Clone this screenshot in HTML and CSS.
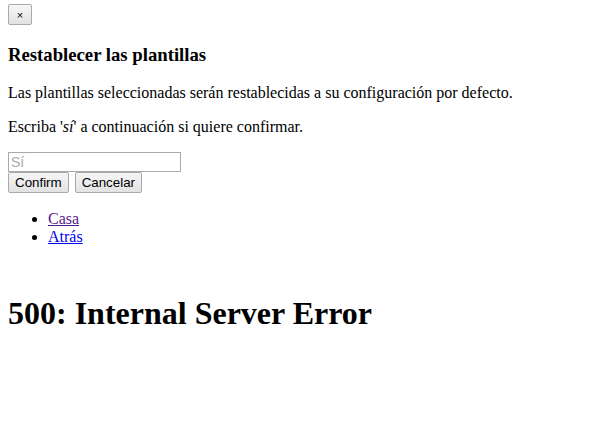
FILE: index.html
```html
<!DOCTYPE html>
<html lang="es">
<head>
<meta charset="utf-8">
<title>500</title>
<link rel="stylesheet" href="styles.css">
</head>
<body>
<div class="modal">
  <button class="close" type="button">×</button>
  <h3 class="title">Restablecer las plantillas</h3>
  <p>Las plantillas seleccionadas serán restablecidas a su configuración por defecto.</p>
  <p>Escriba '<em>sí</em>' a continuación si quiere confirmar.</p>
  <input class="field" type="text" placeholder="Sí"><br>
  <button class="btn" type="button">Confirm</button>
  <button class="btn" type="button">Cancelar</button>
</div>
<ul class="links">
  <li><a class="visited" href="#">Casa</a></li>
  <li><a class="link" href="#">Atrás</a></li>
</ul>
<h1 class="error">500: Internal Server Error</h1>
</body>
</html>
```
FILE: styles.css
```css
body {
  margin: 4px 8px 8px;
  font-family: "Liberation Serif", serif;
  font-size: 16px;
  color: #000;
  background: #fff;
}
.close {
  font-family: "Liberation Sans", sans-serif;
  font-size: 11px;
  width: 24px;
  height: 21px;
  padding: 0;
  border: 1px solid #a9a9a9;
  border-radius: 2px;
  background: linear-gradient(#f6f6f6, #e2e2e2);
  color: #000;
}
.title { font-size: 18.72px; margin: 19px 0 18px; }
.field {
  font-family: "Liberation Sans", sans-serif;
  font-size: 14px;
  width: 167px;
  height: 16px;
  padding: 1px 2px;
  border: 1px solid #a9a9a9;
  margin: 0;
}
.field::placeholder { color: #a9a9a9; }
.btn {
  font-family: "Liberation Sans", sans-serif;
  font-size: 13.33px;
  height: 21px;
  padding: 1px 6px;
  border: 1px solid #a9a9a9;
  border-radius: 2px;
  background: linear-gradient(#f6f6f6, #e2e2e2);
  color: #000;
  margin: 0 2px 0 0;
}
.links { margin: 17px 0 16px; padding-left: 40px; }
.visited { color: #551a8b; }
.link { color: #0000ee; }
.error { font-size: 32px; margin: 49px 0 21px; }
```
